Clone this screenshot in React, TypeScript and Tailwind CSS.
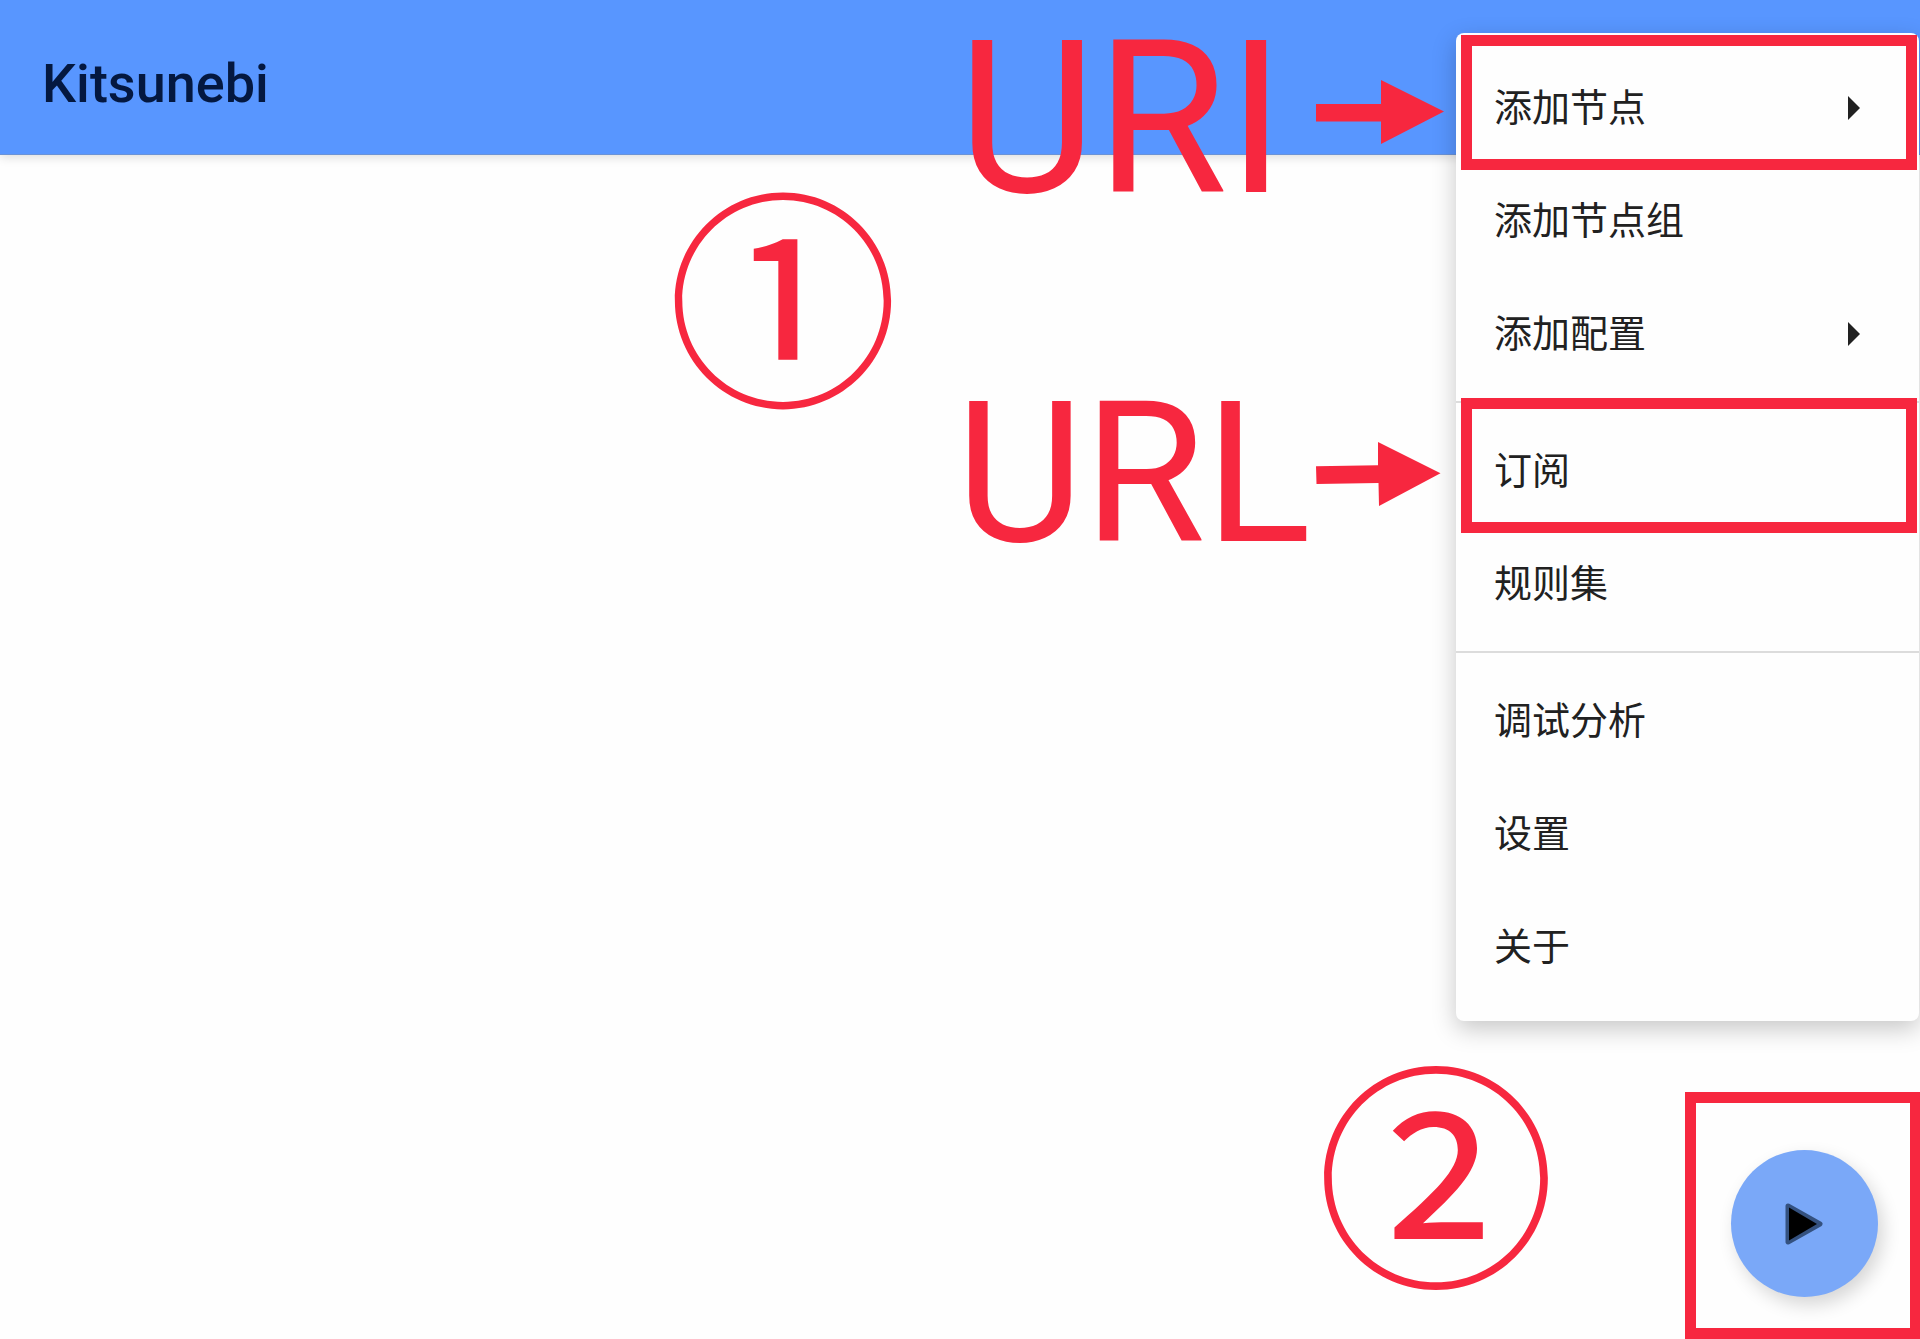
type MenuEntry = { label: string; submenu?: boolean; marked?: boolean };

const groups: MenuEntry[][] = [
  [
    { label: "添加节点", submenu: true, marked: true },
    { label: "添加节点组" },
    { label: "添加配置", submenu: true },
  ],
  [{ label: "订阅", marked: true }, { label: "规则集" }],
  [{ label: "调试分析" }, { label: "设置" }, { label: "关于" }],
];

function MenuRow({ label, submenu, marked }: MenuEntry) {
  return (
    <li className="relative">
      <button
        type="button"
        role="menuitem"
        className="flex h-[113px] w-full items-center justify-between pr-[59px] pl-[38px] text-left text-[38px] leading-none text-[#212121]"
      >
        <span className="pb-1.5">{label}</span>
        {submenu && (
          <svg width="12" height="24" viewBox="0 0 12 24" fill="#212121" aria-hidden="true">
            <path d="M0 0L12 12L0 24Z" />
          </svg>
        )}
      </button>
      {marked && (
        <div className="pointer-events-none absolute -top-4 right-[2px] -bottom-[6px] left-[5px] border-[11px] border-[#f7273f]" />
      )}
    </li>
  );
}

function OverflowMenu() {
  return (
    <nav className="absolute top-[33px] right-px w-[463px] rounded-lg bg-[#fefefe] py-[18px] shadow-[0_8px_24px_rgba(0,0,0,0.22)]">
      {groups.map((group, index) => (
        <div key={index}>
          {index > 0 && <hr className="my-[11px] border-t-2 border-[#dcdcdc]" />}
          <ul role="menu">
            {group.map((entry) => (
              <MenuRow key={entry.label} {...entry} />
            ))}
          </ul>
        </div>
      ))}
    </nav>
  );
}

function Arrow() {
  return (
    <svg width="128" height="64" viewBox="0 0 128 64" fill="#f7273f" aria-hidden="true">
      <path d="M0 24H65V0L128 31.5L65 64V41.500H0Z" />
    </svg>
  );
}

function TiltedArrow() {
  return (
    <svg width="128" height="64" viewBox="0 0 128 64" fill="#f7273f" aria-hidden="true">
      <path d="M0 24.300L62 23.300V0L124.500 31.300L63 64L62.500 41L0.500 42Z" />
    </svg>
  );
}

export default function App() {
  return (
    <main className="relative min-h-screen overflow-hidden bg-[#fefefe] font-['Noto_Sans_CJK_SC',sans-serif]">
      <header className="flex h-[155px] items-center border-b border-[#6b93d6] bg-[#5896ff] px-[42px] pt-3.5 shadow-[0_2px_10px_rgba(0,0,0,0.14)]">
        <h1 className="font-[Roboto,sans-serif] text-[54px] leading-none font-medium text-[#041840]">Kitsunebi</h1>
      </header>

      <OverflowMenu />

      <div className="absolute top-[13px] right-[476px] flex gap-[31px] font-[Roboto,sans-serif] text-[#f7273f]">
        <span className="text-[213px] leading-none">URI</span>
        <div className="pt-[67px]">
          <Arrow />
        </div>
      </div>

      <div className="absolute top-[375px] right-[476px] flex gap-[5px] font-[Roboto,sans-serif] text-[#f7273f]">
        <span className="text-[197px] leading-none">URL</span>
        <div className="pt-[67px]">
          <TiltedArrow />
        </div>
      </div>

      <span className="absolute top-[172px] right-[1021px] text-[232px] leading-none text-[#f7273f]">①</span>
      <span className="absolute top-[1045px] right-[364px] text-[240px] leading-none text-[#f7273f]">②</span>

      <div className="absolute -right-px bottom-0 flex h-[247px] w-[236px] items-center justify-center border-[11px] border-[#f7273f] pt-4 pl-0.5">
        <button
          type="button"
          aria-label="启动"
          className="flex size-[147px] items-center justify-center rounded-full bg-[#7aa8f8] shadow-[5px_8px_18px_rgba(0,0,0,0.16)]"
        >
          <svg width="40" height="44" viewBox="0 0 40 44" aria-hidden="true">
            <path d="M4 4L36 22L4 40Z" fill="#000" stroke="#34517f" strokeWidth="5" strokeLinejoin="round" />
            <path d="M5 5.500L33 22L5 38.500Z" fill="#000" />
          </svg>
        </button>
      </div>
    </main>
  );
}
